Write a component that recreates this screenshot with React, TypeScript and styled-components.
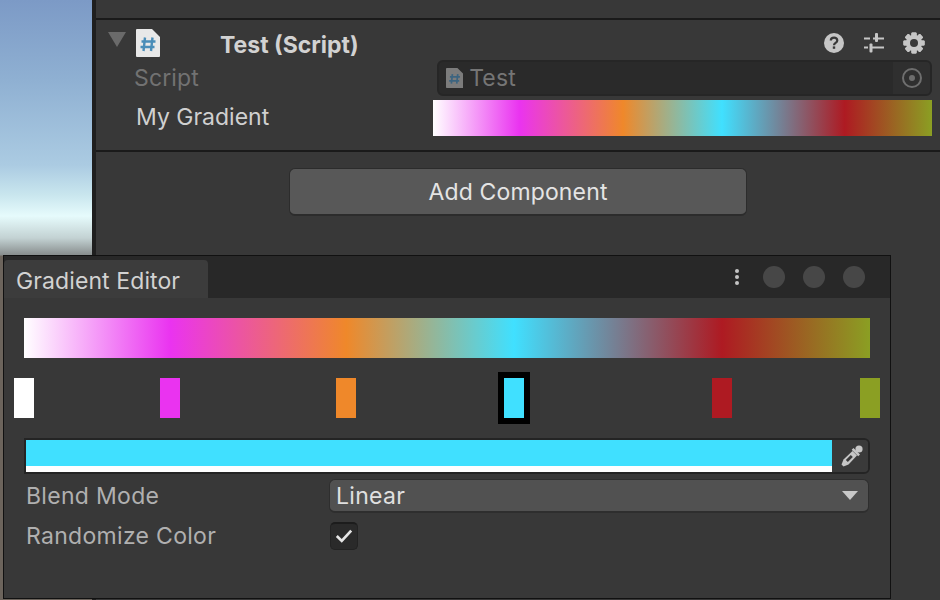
import React from "react";
import styled, { createGlobalStyle } from "styled-components";

const STOPS = [
  { color: "#ffffff", at: 0 },
  { color: "#ea33f0", at: 17.3 },
  { color: "#ef882a", at: 38.1 },
  { color: "#40e0ff", at: 57.9 },
  { color: "#ae1a22", at: 82.5 },
  { color: "#8b9f23", at: 100 },
];

const RAMP = `linear-gradient(to right, ${STOPS.map((s) => `${s.color} ${s.at}%`).join(", ")})`;

const GlobalStyle = createGlobalStyle`
  * { box-sizing: border-box; }
  html, body { margin: 0; padding: 0; }
  body {
    width: 940px;
    height: 600px;
    overflow: hidden;
    background: #383838;
    font-family: Inter, "Liberation Sans", sans-serif;
  }
`;

const Page = styled.div`
  position: relative;
  display: flex;
  width: 940px;
  height: 600px;
  overflow: hidden;
`;

const Scene = styled.div`
  width: 92px;
  flex-shrink: 0;
  background: linear-gradient(
    to bottom,
    #7c9ac6 0,
    #8fb0d2 80px,
    #abcbe2 165px,
    #c9e6ee 195px,
    #e6fbfc 216px,
    #c3d2d3 238px,
    #888d8d 255px,
    #6c645c 256px,
    #6c645c 600px
  );
`;

const Inspector = styled.div`
  flex: 1;
  border-left: 4px solid #1f1f1f;
  background: #383838;
`;

const TopStrip = styled.div`
  height: 20px;
  border-bottom: 2px solid #1a1a1a;
`;

const ComponentBlock = styled.div`
  height: 132px;
  padding: 9px 6px 0 0;
  border-bottom: 2px solid #1a1a1a;
`;

const HeaderRow = styled.div`
  display: flex;
  align-items: flex-start;
  height: 31px;
  padding-left: 12px;
`;

const FoldTriangle = styled.div`
  width: 0;
  height: 0;
  margin-top: 3px;
  border-left: 9px solid transparent;
  border-right: 9px solid transparent;
  border-top: 15px solid #6a6a6a;
`;

const FileIconSlot = styled.div`
  width: 24px;
  height: 28px;
  margin-left: 10px;
`;

const Title = styled.div`
  margin-left: 60px;
  flex: 1;
  font-size: 23px;
  line-height: 32px;
  font-weight: 700;
  color: #d2d2d2;
`;

const Actions = styled.div`
  display: flex;
`;

const ActionSlot = styled.div`
  width: 40px;
  height: 28px;
  display: flex;
  align-items: center;
  justify-content: center;
`;

const PropertyRow = styled.div<{ $dim?: boolean }>`
  display: flex;
  align-items: center;
  height: 36px;
  margin-bottom: 4px;
  padding-left: ${(p) => (p.$dim ? 38 : 40)}px;
  padding-right: 2px;
  font-size: 23px;
  letter-spacing: ${(p) => (p.$dim ? 0.15 : 0)}px;
  color: ${(p) => (p.$dim ? "#727272" : "#d0d0d0")};
`;

const PropertyLabel = styled.div<{ $dim?: boolean }>`
  width: ${(p) => (p.$dim ? 299 : 297)}px;
  flex-shrink: 0;
  margin-top: ${(p) => (p.$dim ? 0 : -2)}px;
`;

const ObjectField = styled.div`
  flex: 1;
  height: 36px;
  margin-left: 4px;
  display: flex;
  align-items: center;
  border: 2px solid #262626;
  border-radius: 6px;
  background: #2a2a2a;
  padding-left: 7px;
  overflow: hidden;
`;

const ObjectName = styled.div`
  flex: 1;
  margin-left: 6px;
  color: #757575;
`;

const ObjectPicker = styled.div`
  width: 37px;
  height: 100%;
  display: flex;
  align-items: center;
  justify-content: center;
  background: #2f2f2f;
`;

const GradientBar = styled.div<{ $height: number }>`
  flex: 1;
  height: ${(p) => p.$height}px;
  background: ${RAMP};
`;

const AddButton = styled.div`
  width: 458px;
  height: 48px;
  margin: 16px 0 0 193px;
  display: flex;
  align-items: center;
  justify-content: center;
  border: 1px solid #2c2c2c;
  border-bottom-width: 2px;
  border-radius: 6px;
  background: #585858;
  color: #e4e4e4;
  font-size: 23px;
  letter-spacing: 0.15px;
`;

const EditorWindow = styled.div`
  position: absolute;
  left: 3px;
  top: 255px;
  width: 888px;
  height: 344px;
  display: flex;
  flex-direction: column;
  border: 1px solid #111;
  background: #383838;
`;

const TitleBar = styled.div`
  height: 42px;
  flex-shrink: 0;
  display: flex;
  align-items: flex-end;
  background: #282828;
`;

const WindowTab = styled.div`
  width: 204px;
  height: 38px;
  padding-left: 12px;
  background: #3c3c3c;
  border-radius: 4px 4px 0 0;
  color: #d2d2d2;
  font-size: 23px;
  letter-spacing: 0.1px;
  line-height: 43px;
`;

const WindowControls = styled.div`
  flex: 1;
  height: 42px;
  display: flex;
  align-items: center;
`;

const MenuDots = styled.div`
  margin-left: 527px;
  display: flex;
  flex-direction: column;
  gap: 2px;
`;

const MenuDot = styled.span`
  width: 4px;
  height: 4px;
  border-radius: 50%;
  background: #c4c4c4;
`;

const TrafficLights = styled.div`
  margin-left: 24px;
  display: flex;
  gap: 18px;
`;

const TrafficLight = styled.span`
  width: 22px;
  height: 22px;
  border-radius: 50%;
  background: #474747;
`;

const WindowBody = styled.div`
  flex: 1;
  padding: 20px 20px 0 20px;
  display: flex;
  flex-direction: column;
`;

const RampRow = styled.div`
  display: flex;
  height: 40px;
`;

const StopTrack = styled.div`
  position: relative;
  height: 52px;
  margin-top: 14px;
`;

const Stop = styled.div<{ $color: string; $selected?: boolean }>`
  position: absolute;
  top: ${(p) => (p.$selected ? 0 : 6)}px;
  width: ${(p) => (p.$selected ? 32 : 20)}px;
  height: ${(p) => (p.$selected ? 52 : 40)}px;
  transform: translateX(-50%);
  background: ${(p) => p.$color};
  border: ${(p) => (p.$selected ? "6px solid #000" : "none")};
`;

const ColorField = styled.div`
  display: flex;
  height: 36px;
  margin-top: 14px;
  border: 2px solid #242424;
  border-radius: 0 6px 6px 0;
`;

const ColorSwatch = styled.div`
  flex: 1;
  height: 32px;
  background: #40e0ff;
  border-bottom: 6px solid #fff;
`;

const PickerButton = styled.div`
  width: 36px;
  display: flex;
  align-items: center;
  justify-content: flex-end;
  padding-right: 5px;
  background: #3a3a3a;
  border-radius: 0 4px 4px 0;
`;

const FormRow = styled.div<{ $top: number }>`
  display: flex;
  align-items: center;
  height: 34px;
  margin-top: ${(p) => p.$top}px;
  padding-left: 2px;
  font-size: 23px;
  letter-spacing: 0.3px;
  color: #b0b0b0;
`;

const FormLabel = styled.div`
  width: 303px;
  flex-shrink: 0;
`;

const Dropdown = styled.div`
  width: 540px;
  height: 34px;
  display: flex;
  align-items: center;
  justify-content: space-between;
  padding: 0 10px 0 6px;
  background: #515151;
  border: 1px solid #2e2e2e;
  border-bottom-width: 2px;
  border-radius: 6px;
  color: #e0e0e0;
`;

const DropdownArrow = styled.div`
  width: 0;
  height: 0;
  border-left: 8px solid transparent;
  border-right: 8px solid transparent;
  border-top: 9px solid #c8c8c8;
`;

const Checkbox = styled.div`
  width: 28px;
  height: 28px;
  margin-left: 1px;
  display: flex;
  align-items: center;
  justify-content: center;
  padding-bottom: 2px;
  background: #2a2a2a;
  border: 1px solid #232323;
  border-top: 2px solid #1c1c1c;
  border-radius: 5px;
`;

function FileIcon({ size, dim }: { size: number; dim?: boolean }) {
  const paper = dim ? "#7c7c7c" : "#e8e8e8";
  const mark = dim ? "#3c6480" : "#4a8db8";
  return (
    <svg width={(size * 24) / 28} height={size} viewBox="0 0 24 28">
      <path d="M1 0h15l8 8v19a1 1 0 0 1-1 1H1a1 1 0 0 1-1-1V1a1 1 0 0 1 1-1z" fill={paper} />
      <path d="M9 8.500 7.500 22M16.500 8.500 15 22M5.500 12.500h14M4.500 18h14" stroke={mark} strokeWidth="2.4" fill="none" />
    </svg>
  );
}

function HelpIcon() {
  return (
    <svg width="20" height="20" viewBox="0 0 20 20">
      <circle cx="10" cy="10" r="10" fill="#c6c6c6" />
      <path d="M6.800 7.600c0-2 1.500-3 3.300-3s3.200 1 3.200 2.800c0 2.500-3.300 2.400-3.300 4.800" stroke="#383838" strokeWidth="2.200" fill="none" />
      <rect x="8.800" y="13.400" width="2.400" height="2.400" fill="#383838" />
    </svg>
  );
}

function SlidersIcon() {
  return (
    <svg width="20" height="20" viewBox="0 0 20 20" fill="#c6c6c6">
      <rect x="0" y="4.500" width="20" height="2" />
      <rect x="11" y="0" width="3" height="9" rx="1" />
      <rect x="0" y="13.500" width="4" height="2" />
      <rect x="8" y="13.500" width="12" height="2" />
      <rect x="5.500" y="10.500" width="3" height="9" rx="1" />
      <rect x="6" y="4" width="3" height="3" fill="#383838" />
    </svg>
  );
}

function GearIcon() {
  const teeth = [0, 45, 90, 135, 180, 225, 270, 315];
  return (
    <svg width="22" height="22" viewBox="0 0 22 22">
      {teeth.map((deg) => (
        <rect key={deg} x="8.400" y="0.400" width="5.200" height="21.200" rx="1" fill="#c6c6c6" transform={`rotate(${deg} 11 11)`} />
      ))}
      <circle cx="11" cy="11" r="8" fill="#c6c6c6" />
      <circle cx="11" cy="11" r="4" fill="#383838" />
    </svg>
  );
}

function TargetIcon() {
  return (
    <svg width="20" height="20" viewBox="0 0 20 20">
      <circle cx="10" cy="10" r="9" stroke="#6e6e6e" strokeWidth="2" fill="none" />
      <circle cx="10" cy="10" r="3" fill="#6e6e6e" />
    </svg>
  );
}

function EyedropperIcon() {
  return (
    <svg width="22" height="22" viewBox="0 0 22 22">
      <path d="M12.500 3 19 9.500 17.200 11.300 10.700 4.800z" fill="#c6c6c6" />
      <circle cx="18" cy="4" r="3.600" fill="#c6c6c6" />
      <path d="M11.500 6 16 10.500 7.500 19.500 2.500 21.500 0.500 19.500 2.500 14.500z" fill="#c6c6c6" />
      <path d="M9.800 10 11.800 12 6.800 17 4.800 15z" fill="#3a3a3a" />
    </svg>
  );
}

function CheckIcon() {
  return (
    <svg width="18" height="15" viewBox="0 0 20 16">
      <path d="M2 8.500 7.500 14 18 2.500" stroke="#e6e6e6" strokeWidth="3" fill="none" />
    </svg>
  );
}

function App() {
  return (
    <Page>
      <GlobalStyle />
      <Scene />
      <Inspector>
        <TopStrip />
        <ComponentBlock>
          <HeaderRow>
            <FoldTriangle />
            <FileIconSlot>
              <FileIcon size={28} />
            </FileIconSlot>
            <Title>Test (Script)</Title>
            <Actions>
              <ActionSlot>
                <HelpIcon />
              </ActionSlot>
              <ActionSlot>
                <SlidersIcon />
              </ActionSlot>
              <ActionSlot>
                <GearIcon />
              </ActionSlot>
            </Actions>
          </HeaderRow>
          <PropertyRow $dim>
            <PropertyLabel $dim>Script</PropertyLabel>
            <ObjectField>
              <FileIcon size={20} dim />
              <ObjectName>Test</ObjectName>
              <ObjectPicker>
                <TargetIcon />
              </ObjectPicker>
            </ObjectField>
          </PropertyRow>
          <PropertyRow>
            <PropertyLabel>My Gradient</PropertyLabel>
            <GradientBar $height={36} />
          </PropertyRow>
        </ComponentBlock>
        <AddButton>Add Component</AddButton>
      </Inspector>

      <EditorWindow>
        <TitleBar>
          <WindowTab>Gradient Editor</WindowTab>
          <WindowControls>
            <MenuDots>
              <MenuDot />
              <MenuDot />
              <MenuDot />
            </MenuDots>
            <TrafficLights>
              <TrafficLight />
              <TrafficLight />
              <TrafficLight />
            </TrafficLights>
          </WindowControls>
        </TitleBar>
        <WindowBody>
          <RampRow>
            <GradientBar $height={40} />
          </RampRow>
          <StopTrack>
            {STOPS.map((s) => (
              <Stop key={s.at} $color={s.color} $selected={s.at === 57.9} style={{ left: `${s.at}%` }} />
            ))}
          </StopTrack>
          <ColorField>
            <ColorSwatch />
            <PickerButton>
              <EyedropperIcon />
            </PickerButton>
          </ColorField>
          <FormRow $top={5}>
            <FormLabel>Blend Mode</FormLabel>
            <Dropdown>
              Linear
              <DropdownArrow />
            </Dropdown>
          </FormRow>
          <FormRow $top={6}>
            <FormLabel>Randomize Color</FormLabel>
            <Checkbox>
              <CheckIcon />
            </Checkbox>
          </FormRow>
        </WindowBody>
      </EditorWindow>
    </Page>
  );
}

export default App;
